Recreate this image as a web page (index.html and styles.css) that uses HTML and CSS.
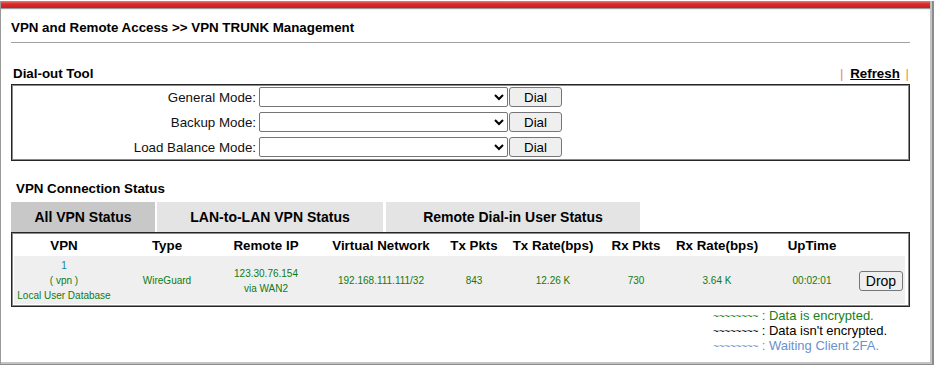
FILE: index.html
```html
<!DOCTYPE html>
<html lang="en">
<head>
  <meta charset="UTF-8">
  <title>VPN TRUNK Management</title>
  <link rel="stylesheet" href="styles.css">
</head>
<body>
  <div class="window">
    <div class="topbar"></div>
    <div class="content">
      <h1 class="title">VPN and Remote Access &gt;&gt; VPN TRUNK Management</h1>

      <div class="section-head">
        <span>Dial-out Tool</span>
        <span class="links"><span class="pipe">|</span> <a href="#" class="refresh">Refresh</a> <span class="pipe">|</span></span>
      </div>
      <div class="box dial-box">
        <div class="dial-row">
          <label>General Mode:</label>
          <select><option></option></select>
          <button class="btn">Dial</button>
        </div>
        <div class="dial-row">
          <label>Backup Mode:</label>
          <select><option></option></select>
          <button class="btn">Dial</button>
        </div>
        <div class="dial-row">
          <label>Load Balance Mode:</label>
          <select><option></option></select>
          <button class="btn">Dial</button>
        </div>
      </div>

      <div class="status-head">VPN Connection Status</div>
      <div class="tabs">
        <div class="tab active">All VPN Status</div>
        <div class="tab tab-lan">LAN-to-LAN VPN Status</div>
        <div class="tab tab-dial">Remote Dial-in User Status</div>
      </div>
      <div class="box status-box">
        <table class="status">
          <colgroup>
            <col style="width:100px"><col style="width:106px"><col style="width:92px">
            <col style="width:138px"><col style="width:48px"><col style="width:110px">
            <col style="width:56px"><col style="width:106px"><col style="width:84px">
            <col style="width:51px">
          </colgroup>
          <tr class="head">
            <th>VPN</th><th>Type</th><th>Remote IP</th><th>Virtual Network</th>
            <th>Tx Pkts</th><th>Tx Rate(bps)</th><th>Rx Pkts</th><th>Rx Rate(bps)</th>
            <th>UpTime</th><th></th>
          </tr>
          <tr class="data">
            <td><a href="#" class="idx">1</a><br>( vpn )<br>Local User Database</td>
            <td>WireGuard</td>
            <td>123.30.76.154<br>via WAN2</td>
            <td>192.168.111.111/32</td>
            <td>843</td>
            <td>12.26 K</td>
            <td>730</td>
            <td>3.64 K</td>
            <td>00:02:01</td>
            <td><button class="btn drop">Drop</button></td>
          </tr>
        </table>
      </div>

      <div class="legend">
        <div class="enc"><span class="wave">~~~~~~~~</span> : Data is encrypted.</div>
        <div class="plain"><span class="wave">~~~~~~~~</span> : Data isn't encrypted.</div>
        <div class="wait"><span class="wave">~~~~~~~~</span> : Waiting Client 2FA.</div>
      </div>
    </div>
  </div>
</body>
</html>
```

FILE: styles.css
```css
* {
  box-sizing: border-box;
}

body {
  margin: 0;
  background: #fff;
  font-family: "Liberation Sans", Arial, sans-serif;
  font-size: 13.33px;
  color: #000;
}

.window {
  width: 934px;
  height: 365px;
  border-left: 1px solid #9a9a9a;
  border-right: 2px solid #8c8c8c;
  border-bottom: 2px solid #8c8c8c;
  box-shadow: inset -2px -2px 0 #c4c4c4;
}

.topbar {
  margin-top: 1px;
  margin-right: 2px;
  height: 7px;
  background: linear-gradient(#f07a7a, #dc2c2c 40%, #c81f1f);
  box-shadow: 0 1px 1px #9a9a9a;
}

.content {
  padding: 0 22px 0 10px;
}

.title {
  margin: 12px 0 0;
  padding-bottom: 7px;
  font-size: 13.33px;
  line-height: 15px;
  font-weight: bold;
  border-bottom: 1px solid #a0a0a0;
}

.section-head {
  display: flex;
  justify-content: space-between;
  margin: 23px 0 3px;
  padding: 0 1px 0 2px;
  font-weight: bold;
  line-height: 15px;
}

.pipe {
  color: #ef8a55;
  font-weight: normal;
}

.refresh {
  margin: 0 2px 0 3px;
  color: #000;
  text-decoration: underline;
}

.box {
  border: 1px solid #262626;
  box-shadow: inset 0 0 0 1px #8a8a8a;
}

.dial-box {
  display: flex;
  flex-direction: column;
  gap: 5px;
  padding: 2px 2px 3px;
}

.dial-row {
  display: grid;
  grid-template-columns: 242px 249px 53px;
  column-gap: 2px;
  align-items: center;
  height: 20px;
}

.dial-row label {
  text-align: right;
  color: #111;
}

.dial-row select {
  width: 249px;
  height: 20px;
  margin-left: 1px;
  background: #fff;
  border: 1px solid #767676;
  border-radius: 2px;
  font-size: 13px;
}

.btn {
  height: 20px;
  padding: 0;
  background: #efefef;
  border: 1px solid #767676;
  border-radius: 3px;
  font-family: "Liberation Sans", Arial, sans-serif;
  font-size: 13.33px;
  color: #000;
}

.status-head {
  margin: 20px 0 0;
  padding-left: 5px;
  font-weight: bold;
  line-height: 15px;
}

.tabs {
  display: flex;
  margin-top: 6px;
  height: 30px;
}

.tab {
  margin-right: 2px;
  font-size: 14px;
  font-weight: bold;
  line-height: 30px;
  text-align: center;
  background: #e4e4e4;
}

.tab.active {
  width: 144px;
  background: #c8c8c8;
}

.tab-lan {
  width: 226px;
  margin-right: 3px;
}

.tab-dial {
  width: 254px;
}

.status-box {
  padding: 0 2px 2px;
}

.status {
  width: 891px;
  margin-top: 2px;
  table-layout: fixed;
  border-collapse: collapse;
}

.status th {
  height: 21px;
  padding: 0;
  font-size: 13.33px;
  white-space: nowrap;
  text-align: center;
}

.status .data {
  background: #efefef;
}

.status td {
  height: 48px;
  padding: 1px 0 0;
  font-size: 10px;
  line-height: 15px;
  color: #117a11;
  text-align: center;
  white-space: nowrap;
}

.idx {
  color: #1384a4;
  text-decoration: none;
}

.drop {
  width: 44px;
  font-size: 14px;
  margin-left: 3px;
}

.legend {
  margin: 1px 0 0 702px;
  font-size: 13px;
}

.legend div {
  height: 15px;
  line-height: 15px;
}

.wave {
  font-size: 10px;
  line-height: 10px;
  letter-spacing: -0.2px;
}

.enc {
  color: #148214;
}

.plain {
  color: #000;
}

.wait {
  color: #6b8fd0;
}
```
